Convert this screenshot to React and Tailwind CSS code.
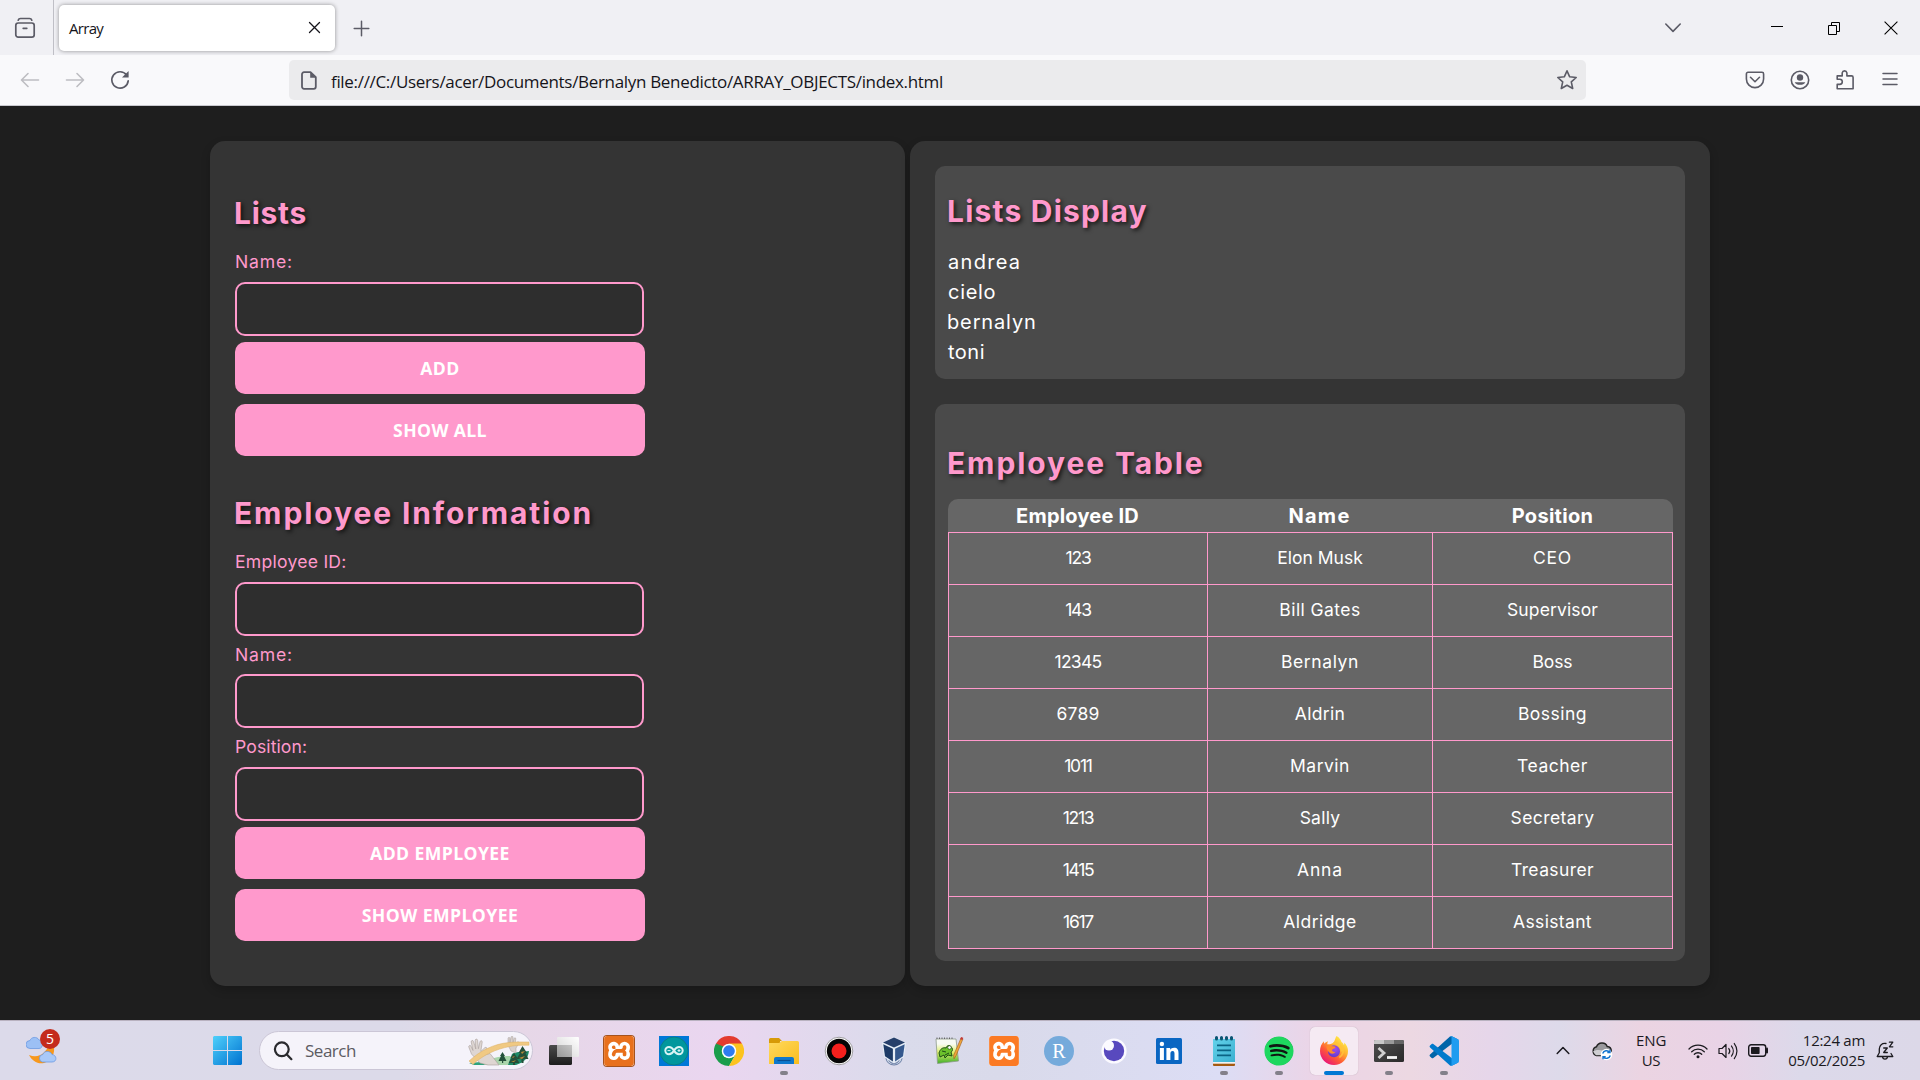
import React from "react";
import { SiXampp } from "react-icons/si";
import { FaSpotify } from "react-icons/fa";

/* ---------- Browser chrome ---------- */

function TabBar() {
  return (
    <div className="flex h-[55px] items-center bg-[#f0f0f4]">
      <div className="flex h-full w-[54px] items-center border-r border-[#bfbfc6] pl-[14px]">
        <svg width="22" height="22" viewBox="0 0 22 22" fill="none" stroke="#5b5b66" strokeWidth="1.7" strokeLinecap="round">
          <path d="M4.2 3.2C4.6 1.9 5.5 1.5 6.5 1.5h9c1 0 1.9.4 2.3 1.7" />
          <rect x="1.8" y="6" width="18.4" height="14.2" rx="2.4" />
          <path d="M9.2 11.3h3.6" />
        </svg>
      </div>
      <div className="ml-[5px] flex h-[46px] w-[276px] items-center rounded-[5px] bg-white pl-[10px] pr-[14px] shadow-[0_0_4px_rgba(0,0,0,0.4)]">
        <span className="mt-[1px] font-['Open_Sans',sans-serif] text-[15px] tracking-[-0.7px] text-[#15141a]">Array</span>
        <svg className="ml-auto" width="13" height="13" viewBox="0 0 13 13" stroke="#15141a" strokeWidth="1.3" strokeLinecap="round">
          <path d="M1.5 1.5l10 10M11.5 1.5l-10 10" />
        </svg>
      </div>
      <svg className="ml-[18px] mt-[2px]" width="17" height="17" viewBox="0 0 17 17" stroke="#5b5b66" strokeWidth="1.5" strokeLinecap="round">
        <path d="M8.5 1.2v14.6M1.2 8.5h14.6" />
      </svg>
      <div className="ml-auto mr-[22px] flex items-center">
        <svg width="18" height="12" viewBox="0 0 18 12" fill="none" stroke="#5b5b66" strokeWidth="1.6" strokeLinecap="round" strokeLinejoin="round">
          <path d="M1.8 2l7.2 7.4L16.200 2" />
        </svg>
        <svg className="ml-[88px] mt-[-3px]" width="14" height="3" viewBox="0 0 14 3"><path d="M1 1.500h12" stroke="#000" /></svg>
        <svg className="ml-[43px]" width="14" height="14" viewBox="0 0 14 14" fill="none" stroke="#000" strokeWidth="1">
          <path d="M1.500 4.500h8v9h-8zM4.500 4.500v-3h8v9h-3" />
        </svg>
        <svg className="ml-[43px]" width="14" height="14" viewBox="0 0 14 14" stroke="#000" strokeWidth="1.1">
          <path d="M.6.600l12.800 12.800M13.400.600L.600 13.400" />
        </svg>
      </div>
    </div>
  );
}

function NavBar() {
  return (
    <div className="flex h-[51px] items-center border-b border-[#c9c9cf] bg-[#f9f9fb]">
      <div className="flex items-center pl-5">
        <svg width="20" height="16" viewBox="0 0 20 16" fill="none" stroke="#bdbdc2" strokeWidth="1.6" strokeLinecap="round" strokeLinejoin="round">
          <path d="M18.500 8H1.800M8 1.500L1.500 8 8 14.500" />
        </svg>
        <svg className="ml-[25px]" width="20" height="16" viewBox="0 0 20 16" fill="none" stroke="#bdbdc2" strokeWidth="1.6" strokeLinecap="round" strokeLinejoin="round">
          <path d="M1.500 8h16.700M12 1.500L18.500 8 12 14.500" />
        </svg>
        <svg className="ml-[25px]" width="20" height="20" viewBox="0 0 20 20" fill="none" stroke="#5b5b66" strokeWidth="1.7" strokeLinecap="round">
          <path d="M16.600 5A8.200 8.200 0 1 0 18.200 10.800" />
          <path d="M18.600 1v6.600H12z" fill="#5b5b66" stroke="none" />
        </svg>
      </div>
      <div className="ml-[159px] flex h-10 w-[1297px] items-center rounded-[5px] bg-[#ebebed] pl-3 pr-2">
        <svg width="16" height="19" viewBox="0 0 16 19" fill="none" stroke="#5b5b66" strokeWidth="1.8" strokeLinejoin="round">
          <path d="M3 1.200h6.500l5.300 5v9.600a2 2 0 0 1-2 2H3a2 2 0 0 1-2-2V3.200a2 2 0 0 1 2-2z" />
          <path d="M9.200 1v5.700h5.800z" fill="#5b5b66" stroke="none" />
        </svg>
        <span className="ml-[14px] mt-[3px] whitespace-nowrap font-['Open_Sans',sans-serif] text-[17px] leading-6 tracking-[-0.32px] text-[#15141a]">
          file:///C:/Users/acer/Documents/Bernalyn Benedicto/ARRAY_OBJECTS/index.html
        </span>
        <svg className="ml-auto" width="22" height="22" viewBox="0 0 22 22" fill="none" stroke="#5b5b66" strokeWidth="1.6" strokeLinejoin="round">
          <path d="M11 1.800l2.700 6 6.500.700-4.900 4.300 1.400 6.700L11 16.200l-5.700 3.300 1.400-6.700L1.800 8.500l6.500-.7z" />
        </svg>
      </div>
      <div className="ml-auto mr-[22px] flex items-center">
        <svg width="20" height="18" viewBox="0 0 20 18" fill="none" stroke="#5b5b66" strokeWidth="1.600" strokeLinecap="round" strokeLinejoin="round">
          <path d="M3 1.300h14a1.600 1.600 0 0 1 1.600 1.600V8a8.600 8.600 0 0 1-17.200 0V2.900A1.600 1.600 0 0 1 3 1.300z" />
          <path d="M5.500 6.300L10 10.700l4.500-4.400" />
        </svg>
        <svg className="ml-[25px]" width="20" height="20" viewBox="0 0 20 20" fill="none" stroke="#5b5b66" strokeWidth="1.600">
          <circle cx="10" cy="10" r="8.700" />
          <circle cx="10" cy="7.500" r="3.200" fill="#5b5b66" stroke="none" />
          <path d="M4.700 12.200h10.600a5.700 4.200 0 0 1-10.600 0z" fill="#5b5b66" stroke="none" />
        </svg>
        <svg className="ml-[25px]" width="20" height="22" viewBox="0 0 20 22" fill="none" stroke="#5b5b66" strokeWidth="1.600" strokeLinejoin="round">
          <path d="M2.200 8.800V6.900h5V3.800a2.400 2.400 0 0 1 4.700 0v3.100h4.700a1.500 1.500 0 0 1 1.500 1.500v11.300H2.200v-4.300h2.500a2.600 2.600 0 0 0 0-5.200H2.200z" />
        </svg>
        <svg className="ml-[27px] mt-[-2px]" width="16" height="14" viewBox="0 0 16 14" stroke="#5b5b66" strokeWidth="1.500" strokeLinecap="round">
          <path d="M1 1.500h14M1 7h14M1 12.500h14" />
        </svg>
      </div>
    </div>
  );
}

/* ---------- Page content ---------- */

function Heading({ children, className }) {
  return (
    <h2 className={"whitespace-nowrap text-[30px] font-bold leading-10 text-[#ff99cc] [text-shadow:2px_2px_4px_rgba(0,0,0,0.7)] " + className}>
      {children}
    </h2>
  );
}

function Label({ children, className }) {
  return <label className={"block text-[17.6px] leading-[26px] text-[#ff99cc] " + className}>{children}</label>;
}

function Input({ className }) {
  return <input className={"block h-[54px] w-[409px] rounded-[10px] border-2 border-[#ff99cc] bg-[#2e2e2e] outline-none " + className} />;
}

function Button({ children, className }) {
  return (
    <button className={"block h-[52px] w-[410px] rounded-[10px] bg-[#ff99cc] text-center font-['Open_Sans',sans-serif] text-[17.6px] font-bold text-white " + className}>
      {children}
    </button>
  );
}

const ROWS = [
  ["123", "tracking-[-1.2px]", "Elon Musk", "tracking-[0px]", "CEO", "tracking-[0.7px]"],
  ["143", "tracking-[-1.2px]", "Bill Gates", "tracking-[0.44px]", "Supervisor", "tracking-[0.12px]"],
  ["12345", "tracking-[-0.7px]", "Bernalyn", "tracking-[0.6px]", "Boss", "tracking-[-0.1px]"],
  ["6789", "tracking-[0.2px]", "Aldrin", "tracking-[0.3px]", "Bossing", "tracking-[0.5px]"],
  ["1011", "tracking-[-1.2px]", "Marvin", "tracking-[0.5px]", "Teacher", "tracking-[0.5px]"],
  ["1213", "tracking-[-1.3px]", "Sally", "tracking-[0.25px]", "Secretary", "tracking-[0.4px]"],
  ["1415", "tracking-[-1.3px]", "Anna", "tracking-[0.9px]", "Treasurer", "tracking-[0.4px]"],
  ["1617", "tracking-[-1.3px]", "Aldridge", "tracking-[0.44px]", "Assistant", "tracking-[0.35px]"],
];

function EmployeeTable() {
  return (
    <div className="mt-4 w-[725px] overflow-hidden rounded-t-[10px] bg-[#666666] text-center text-white">
      <div className="grid h-[33px] grid-cols-[259px_225px_241px] pt-[2px] text-[20px] font-bold leading-[30px]">
        <div className="tracking-[0.2px]">Employee ID</div>
        <div className="tracking-[1.3px]">Name</div>
        <div className="tracking-[0.3px]">Position</div>
      </div>
      <div className="border-b border-r border-[#ff99cc] text-[17.5px] leading-[26px]">
        {ROWS.map((r) => (
          <div key={r[0]} className="grid h-[52px] grid-cols-[259px_225px_240px]">
            <div className={"border-l border-t border-[#ff99cc] pt-3 " + r[1]}>{r[0]}</div>
            <div className={"border-l border-t border-[#ff99cc] pt-3 " + r[3]}>{r[2]}</div>
            <div className={"border-l border-t border-[#ff99cc] pt-3 " + r[5]}>{r[4]}</div>
          </div>
        ))}
      </div>
    </div>
  );
}

function Page() {
  return (
    <main className="flex h-[914px] items-start justify-center gap-[5px] bg-[#1e1e1e] pt-[35px] font-[Inter,sans-serif]">
      <section className="h-[845px] w-[695px] rounded-[15px] bg-[#343434] pl-[25px] pt-[52px] shadow-[0_4px_10px_rgba(0,0,0,0.2)]">
        <Heading className="-ml-[1px] tracking-[0.7px]">Lists</Heading>
        <Label className="mt-4 tracking-[0.8px]">Name:</Label>
        <Input className="mt-[7px]" />
        <Button className="mt-[6px] tracking-[0.5px]">ADD</Button>
        <Button className="mt-[10px] tracking-[0.38px]">SHOW ALL</Button>

        <Heading className="-ml-[1px] mt-[37px] tracking-[1.9px]">Employee Information</Heading>
        <Label className="mt-4 tracking-[0.24px]">Employee ID:</Label>
        <Input className="mt-[7px]" />
        <Label className="mt-[6px] tracking-[0.8px]">Name:</Label>
        <Input className="mt-[6px]" />
        <Label className="mt-[6px] tracking-[0.1px]">Position:</Label>
        <Input className="mt-[7px]" />
        <Button className="mt-[6px] tracking-[0.41px]">ADD EMPLOYEE</Button>
        <Button className="mt-[10px] tracking-[0.44px]">SHOW EMPLOYEE</Button>
      </section>

      <section className="h-[845px] w-[800px] rounded-[15px] bg-[#343434] p-[25px] shadow-[0_4px_10px_rgba(0,0,0,0.2)]">
        <div className="h-[213px] rounded-[10px] bg-[#4a4a4a] pl-[13px] pt-[25px]">
          <Heading className="-ml-[1px] tracking-[1.2px]">Lists Display</Heading>
          <ul className="mt-4 text-[20px] leading-[30px] text-white">
            <li className="tracking-[1.3px]">andrea</li>
            <li className="tracking-[0.7px]">cielo</li>
            <li className="-ml-[1px] tracking-[0.86px]">bernalyn</li>
            <li className="tracking-[0.5px]">toni</li>
          </ul>
        </div>
        <div className="mt-[25px] h-[557px] rounded-[10px] bg-[#4a4a4a] pl-[13px] pt-[39px]">
          <Heading className="-ml-[1px] tracking-[1.9px]">Employee Table</Heading>
          <EmployeeTable />
        </div>
      </section>
    </main>
  );
}

/* ---------- Taskbar icons ---------- */

function WeatherIcon() {
  return (
    <div className="relative h-[38px] w-[36px]">
      <svg className="absolute left-0 top-[3px]" width="34" height="34" viewBox="0 0 34 34">
        <path d="M22 5a14 14 0 0 1-19 17c3 6 9 9.500 15 8 7-2 12-9 9.500-18.500C26.500 8 24.500 6 22 5z" fill="#f7981d" />
        <path d="M4 15.500a4 4 0 0 1 0-8C5 4 11 3 13 7c4 0 5 8.500 0 8.500z" fill="#9cc0f5" stroke="#6d9be2" strokeWidth=".8" />
        <path d="M16.500 29a3.800 3.800 0 0 1 .3-7.500c1.200-4 7.500-4.200 9.200 0 5 .5 5.400 7.500 0 7.500z" fill="#a9c9f8" stroke="#6d9be2" strokeWidth=".8" />
      </svg>
      <div className="absolute left-[14px] top-[-1px] flex size-5 items-center justify-center rounded-full bg-[#c42b1c] font-['Open_Sans',sans-serif] text-[14px] leading-none text-white">
        5
      </div>
    </div>
  );
}

function StartIcon() {
  return (
    <svg width="29" height="29" viewBox="0 0 29 29">
      <defs>
        <linearGradient id="start" x1="0" y1="0" x2="1" y2="1">
          <stop offset="0" stopColor="#4fd0fb" />
          <stop offset="1" stopColor="#0072d0" />
        </linearGradient>
      </defs>
      <path d="M1 0h13v14H0V1zM15 0h13l1 1v13H15zM0 15h14v14H1l-1-1zM15 15h14v13l-1 1H15z" fill="url(#start)" />
    </svg>
  );
}

function SearchPill() {
  return (
    <div className="ml-[17px] flex h-[39px] w-[274px] items-center overflow-hidden rounded-full border border-[#cbc6d6] bg-[#f5f3fa] pl-[13px]">
      <svg width="20" height="20" viewBox="0 0 20 20" fill="none" stroke="#2a2a2e" strokeWidth="2.200" strokeLinecap="round">
        <circle cx="8.800" cy="8.300" r="6.900" />
        <path d="M13.600 13.200l4.800 5" />
      </svg>
      <span className="ml-[12px] font-['Open_Sans',sans-serif] text-[17px] tracking-[-0.48px] text-[#5c5b62]">Search</span>
      <svg className="ml-auto mr-[2px]" width="62" height="30" viewBox="0 0 62 30">
        <path d="M10 29c10-7 22-9 32-9 4 3 2 8 1 9z" fill="#a9d5ab" />
        <path d="M1 27l12-1 4 3H6z" fill="#2fa37d" />
        <path d="M44 18c5-3 12-2 17-3-1 7-4 11-13 14h-8z" fill="#1d8a66" />
        <path d="M40 9V2.500c0-1.500 2-1.500 2 0V7l1-6c.3-1.200 2-1 2 .2V7l1-4.500c.4-1.200 2-.8 1.800.5L47 8l2.500-2c1-.5 2 .6 1.300 1.500L48 12v5l-5-2z" fill="#d8d0cc" stroke="#a79e9b" strokeWidth=".5" />
        <path d="M12 27L3.500 18 .8 11c-.4-1.600 1.500-2.200 2.200-.8l2 4.300L3.200 6c-.3-1.700 1.900-2.200 2.400-.5l2.200 7.500-.6-8.500c0-1.800 2.200-1.900 2.400-.1l.8 8.300 1.600-7c.5-1.600 2.500-1.100 2.200.5l-1.400 9.300 4-3.800c1.400-1 2.700.4 1.800 1.700L15 19.500l7-2 9 11.500H20z" fill="#ded6d2" stroke="#a79e9b" strokeWidth=".6" />
        <path d="M1 25C12 15 25 8 41 6.500c8-.8 13-.5 20-.5v3.200c-8 0-13 0-19 1.300C28 13 15 19 5 28.500z" fill="#f0c983" stroke="#dcb064" strokeWidth=".5" />
        <path d="M54.500 10l-4 7h1.500l-3.500 6h5V27h2v-4h5l-3-6H59zM46 17l-3.500 5h1.200l-3 5H45v2h2v-2h4.500l-3-5h1zM34.500 16L32 20h1l-2.500 5H34v2h1.200v-2h3.300L36 20h1z" fill="#24503a" />
        <path d="M53 16l4-1-3 3zM51 22l6-2-3 3zM44 21l3-1-2 2zM43 26l5-2-2 2z" fill="#b98b38" />
      </svg>
    </div>
  );
}

function TaskView() {
  return (
    <svg width="30" height="30" viewBox="0 0 30 30">
      <defs>
        <linearGradient id="tvd" x1="0" y1="0" x2="0" y2="1"><stop offset="0" stopColor="#4b4b4b" /><stop offset="1" stopColor="#1d1d1d" /></linearGradient>
        <linearGradient id="tvl" x1="0" y1="1" x2="1" y2="0"><stop offset="0" stopColor="#d4d4d4" /><stop offset="1" stopColor="#fff" /></linearGradient>
        <linearGradient id="tvm" x1="0" y1="1" x2="1" y2="0"><stop offset="0" stopColor="#989898" /><stop offset="1" stopColor="#c4c4c4" /></linearGradient>
      </defs>
      <rect x="0" y="9" width="23" height="20" rx="1.500" fill="url(#tvd)" />
      <rect x="8" y="1" width="22" height="20" rx="1" fill="url(#tvl)" />
      <path d="M8 9h15v12H8z" fill="url(#tvm)" />
    </svg>
  );
}

function Xampp({ old }) {
  return (
    <div className={"relative flex size-[30px] items-center justify-center rounded-[3px] bg-white " + (old ? "shadow-[0_0_0_1px_#a5521c]" : "")}>
      <SiXampp className={old ? "size-[30px] text-[#e8701c]" : "size-[30px] text-[#fb7a24]"} />
    </div>
  );
}

function Arduino() {
  return (
    <svg width="30" height="30" viewBox="0 0 30 30">
      <path d="M0 0h30v30H0z" fill="#0078d7" />
      <circle cx="15" cy="15" r="14" fill="#00979d" stroke="#0a7f86" />
      <path d="M15 14.500c-1.600-2.600-3-3.600-5-3.600a3.700 3.700 0 0 0 0 7.400c2 0 3.400-1 5-3.800 1.600-2.600 3-3.600 5-3.600a3.700 3.700 0 0 1 0 7.400c-2 0-3.400-1-5-3.800z" fill="none" stroke="#d8f4f4" strokeWidth="2" />
      <path d="M8.500 14.600h3M18.500 14.600h3M20 13.100v3" stroke="#d8f4f4" />
    </svg>
  );
}

function Chrome() {
  return (
    <svg width="30" height="30" viewBox="0 0 48 48">
      <path d="M24 24L3.200 12A24 24 0 0 1 44.800 12z" fill="#e33b2e" />
      <path d="M24 24L3.200 12A24 24 0 0 0 24 48l10.400-18z" fill="#1a9d4b" />
      <path d="M24 12h20.800A24 24 0 0 1 24 48l10.400-18z" fill="#fcc31e" />
      <path d="M3.200 12h20.800v12H13.600z" fill="#e33b2e" />
      <path d="M3.200 12l10.400 18 4-12z" fill="#1a9d4b" />
      <circle cx="24" cy="24" r="11.600" fill="#fff" />
      <circle cx="24" cy="24" r="9.300" fill="#2f7cf0" />
    </svg>
  );
}

function Explorer() {
  return (
    <svg width="30" height="30" viewBox="0 0 30 30">
      <defs><linearGradient id="fold" x1="0" y1="0" x2="1" y2="1"><stop offset="0" stopColor="#ffd95e" /><stop offset="1" stopColor="#f9bd1e" /></linearGradient></defs>
      <path d="M0 3.500A1.500 1.500 0 0 1 1.500 2h8.500l3 3h-2v5H0z" fill="#d79a07" />
      <path d="M0 7h10l3-2h15.500A1.500 1.500 0 0 1 30 6.500V28H0z" fill="url(#fold)" />
      <path d="M5 28v-5a2 2 0 0 1 2-2h16a2 2 0 0 1 2 2v5z" fill="#0f78cd" />
      <path d="M8.500 24.500h13" stroke="#0a4f92" strokeWidth="1.200" />
    </svg>
  );
}

function Recorder() {
  return (
    <svg width="30" height="30" viewBox="0 0 30 30">
      <circle cx="15" cy="15" r="13.800" fill="#fff" stroke="#8a8a8a" strokeWidth=".8" />
      <circle cx="15" cy="15" r="12.200" fill="#050505" />
      <circle cx="15" cy="15" r="7.500" fill="#f5201d" />
    </svg>
  );
}

function VirtualBox() {
  return (
    <svg width="30" height="30" viewBox="0 0 30 30">
      <path d="M7 22a8 7 0 0 0 16 0z" fill="#c9d3e4" stroke="#6b7fa6" />
      <path d="M10 24a5 3.500 0 0 0 10 0z" fill="#a9b7d0" stroke="#6b7fa6" />
      <path d="M15 1l12 6-2 14-10 6.500L5 21 3 7z" fill="#e6edf6" />
      <path d="M15 1.500l11 5L15 11.500 4 6.500z" fill="#263f6a" />
      <path d="M4.300 8.300l9.600 4.400v12.800L6 20.300z" fill="#1d3a66" />
      <path d="M25.700 8.300l-9.600 4.400v12.800l7.900-5.200z" fill="#35588d" />
    </svg>
  );
}

function NotepadPP() {
  return (
    <svg width="30" height="30" viewBox="0 0 30 30">
      <defs><linearGradient id="npp" x1="0" y1="0" x2="0" y2="1"><stop offset=".2" stopColor="#f8fbf4" /><stop offset=".55" stopColor="#dff06a" /><stop offset="1" stopColor="#3fae2a" /></linearGradient></defs>
      <path d="M2 3h20l2.500 22L3.500 27.500z" fill="url(#npp)" stroke="#8d9a8a" strokeWidth=".8" />
      <path d="M3 3v-1.500M5.500 3v-1.500M8 3v-1.500M10.500 3v-1.500M13 3v-1.500M15.500 3v-1.500M18 3v-1.500" stroke="#666" />
      <path d="M5 17c1-4 4-6 7-5 1-3 4-3 5-1 2 1 2 4 0 5l1 4-4-1-3 3-1-3-4 2z" fill="#6cc22c" stroke="#1f4d17" />
      <circle cx="15.500" cy="11.500" r="1.800" fill="#fff" stroke="#1f4d17" strokeWidth=".7" />
      <path d="M8 15l4 1M11 19l4-2" stroke="#1f4d17" />
      <path d="M27 2l2 .8-7 17-2 3-.3-3.600z" fill="#f0a53a" stroke="#9c5a1b" strokeWidth=".6" />
      <path d="M27 1l2.200.8-.8 2.200-2.200-.8z" fill="#c43a3a" />
    </svg>
  );
}

function RStudio() {
  return (
    <div className="flex size-[30px] items-center justify-center rounded-full bg-[#75aadb] font-['Liberation_Serif',serif] text-[20px] leading-none text-white">R</div>
  );
}

function Insomnia() {
  return (
    <svg width="30" height="30" viewBox="0 0 30 30">
      <circle cx="15" cy="15" r="12.600" fill="#fbfaff" />
      <circle cx="15" cy="15" r="10.200" fill="#5849be" />
      <circle cx="10" cy="9.600" r="5" fill="#fbfaff" />
    </svg>
  );
}

function LinkedIn() {
  return (
    <svg width="30" height="30" viewBox="0 0 30 30">
      <rect x="2" y="2" width="26" height="26" rx="1.500" fill="#0a66c2" />
      <circle cx="7.900" cy="8" r="2.200" fill="#fff" />
      <path d="M5.900 12h4v12h-4zM12.400 12h3.800v1.700c.7-1.200 2-2 3.900-2 3.300 0 4.400 2 4.400 5.300v7h-4v-6.200c0-1.700-.4-2.800-1.900-2.800-1.600 0-2.200 1.100-2.200 2.800V24h-4z" fill="#fff" />
    </svg>
  );
}

function Notepad() {
  return (
    <svg width="30" height="30" viewBox="0 0 30 30">
      <defs><linearGradient id="note" x1="0" y1="0" x2="1" y2="1"><stop offset="0" stopColor="#63d2ea" /><stop offset="1" stopColor="#3bb0d0" /></linearGradient></defs>
      <path d="M4 27h22v2a1 1 0 0 1-1 1H5a1 1 0 0 1-1-1z" fill="#a55a10" />
      <path d="M4 26h22v1.700H4z" fill="#f2f2f2" />
      <path d="M4 3h22v23H4z" fill="url(#note)" />
      <path d="M8 9.300h14M8 14.300h14M8 19.300h14" stroke="#0b6384" strokeWidth="1.800" />
      <path d="M7.500 1.500v1.500M12.500 1.500v1.500M17.500 1.500v1.500M22.500 1.500v1.500" stroke="#0b5573" strokeWidth="3" strokeLinecap="round" />
    </svg>
  );
}

function Spotify() {
  return (
    <div className="flex size-[30px] items-center justify-center">
      <div className="flex size-[28px] items-center justify-center rounded-full bg-[#101512]">
        <FaSpotify className="size-[30px] shrink-0 text-[#1ed75f]" />
      </div>
    </div>
  );
}

function Firefox() {
  return (
    <svg width="30" height="30" viewBox="0 0 30 30">
      <defs>
        <linearGradient id="fx" x1=".85" y1=".1" x2=".2" y2=".95">
          <stop offset="0" stopColor="#fff04a" /><stop offset=".35" stopColor="#ffb02e" /><stop offset=".65" stopColor="#ff5a36" /><stop offset="1" stopColor="#e8127c" />
        </linearGradient>
        <radialGradient id="fp" cx=".6" cy=".3" r=".8"><stop offset="0" stopColor="#a04df0" /><stop offset="1" stopColor="#5a38c8" /></radialGradient>
      </defs>
      <path d="M17.500 0c3 1.500 4.500 4.300 5 6 1.500 1 2 2 2.300 3 .6-.5.500-1.800.300-2.600C28 9 29 12 29 15a14 14 0 0 1-28 0c0-3.600 1.500-7.500 4-9.700 0 1-.1 1.800.2 2.500 1-1.300 2.400-2.200 3.900-2.600-.6 1-.9 2-.8 3 2 .2 4-.2 5.700-1.300C16 5.500 16 2 17.500 0z" fill="url(#fx)" />
      <circle cx="15" cy="15.300" r="6" fill="url(#fp)" />
      <path d="M7.500 10c2-1 4-.8 6 .2 2 0 3 .6 3 1.200-1 1.200-2.800 1-3.500 2.600.2 1.500 2 2.200 3.600 1.800-1.500 2.500-5 2.500-7 0C8 14 7.500 12 7.500 10z" fill="#ff8a2c" />
      <path d="M14 7c4 0 8 3 8.500 7.500 1-1 1-3 .8-4.500 2 5 .5 9-3 11.500" fill="none" stroke="#ffc53a" strokeWidth="1.600" opacity=".8" />
    </svg>
  );
}

function Terminal() {
  return (
    <svg width="30" height="30" viewBox="0 0 30 30">
      <defs><linearGradient id="term" x1="0" y1="0" x2="1" y2="1"><stop offset="0" stopColor="#505050" /><stop offset="1" stopColor="#2a2a2a" /></linearGradient></defs>
      <rect x="0" y="4" width="30" height="22" rx="1.500" fill="url(#term)" />
      <path d="M0 8V5.500A1.500 1.500 0 0 1 1.500 4H10v4z" fill="#c8c8c8" />
      <path d="M10 4h10v4H10z" fill="#9a9a9a" />
      <path d="M20 4h8.500A1.500 1.500 0 0 1 30 5.500V8H20z" fill="#666" />
      <path d="M4.500 12l5.500 5-5.500 5" fill="none" stroke="#cfcfcf" strokeWidth="2.800" />
      <path d="M13 21.500h10" stroke="#f4f4f4" strokeWidth="2.800" />
    </svg>
  );
}

function VSCode() {
  return (
    <svg width="30" height="30" viewBox="0 0 100 100">
      <path d="M96 11L76 1c-2.500-1-5-.6-7 1.200L3.500 62c-2 1.800-2 4.500 0 6l5.500 5c1.500 1.400 3.700 1.500 5.300.3L93 13.500c2.600-2 6-.3 6 3V16c0-2.200-1-4.200-3-5z" fill="#0065a9" />
      <path d="M96 89L76 99c-2.500 1-5 .6-7-1.200L3.500 38c-2-1.800-2-4.500 0-6L9 27c1.500-1.400 3.700-1.500 5.300-.3L93 86.500c2.600 2 6 .3 6-3V84c0 2.200-1 4.200-3 5z" fill="#007acc" />
      <path d="M76 99c-2.500 1-5 .6-7-1.300 2.300 2.300 6 .7 6-2.500V4.800c0-3.200-3.700-4.800-6-2.500C71 .4 73.500 0 76 1l20.500 10c2 1 3.500 3 3.500 5.500v67c0 2.500-1.500 4.500-3.500 5.500z" fill="#1f9cf0" />
    </svg>
  );
}

function TaskItem({ children, running, active }) {
  return (
    <div className={"relative flex size-12 shrink-0 items-center justify-center rounded-[5px] " + (active ? "bg-[#f5eaf3] shadow-[0_0_1px_rgba(0,0,0,0.25)]" : "")}>
      {children}
      {running && <div className="absolute bottom-0 left-5 h-1 w-2 rounded-full bg-[#83808a]" />}
      {active && <div className="absolute bottom-0 left-[14px] h-1 w-5 rounded-full bg-[#0078d4]" />}
    </div>
  );
}

function Tray() {
  return (
    <div className="ml-auto flex h-full items-center pr-[26px] font-['Open_Sans',sans-serif] text-[15px] leading-5 text-[#1b1a1f]">
      <svg width="14" height="9" viewBox="0 0 14 9" fill="none" stroke="#1b1a1f" strokeWidth="1.500" strokeLinecap="round" strokeLinejoin="round">
        <path d="M1.200 7.500L7 1.500l5.800 6" />
      </svg>
      <svg className="ml-[21px]" width="22" height="20" viewBox="0 0 22 20">
        <path d="M5.500 14.500a4.500 4.500 0 0 1 0-8.700C7 1 14.500.500 16.200 5.500c5.500.500 5.500 9 0 9z" fill="#9a999d" stroke="#222" strokeWidth="1.400" />
        <path d="M2 10.500c3-2 10-3 15 3.500l-12 .3z" fill="#cfced2" />
        <circle cx="15.500" cy="13.500" r="5.800" fill="#fff" />
        <path d="M11.700 12.500a4 4 0 0 1 7-1.200M19.300 14.500a4 4 0 0 1-7 1.300M19 8.800v2.700h-2.700M12 18.300v-2.700h2.700" fill="none" stroke="#1273cf" strokeWidth="1.400" />
      </svg>
      <div className="ml-[23px] mt-[-1px] w-[30px] text-center">
        <div className="tracking-[-0.1px]">ENG</div>
        <div className="tracking-[-0.4px]">US</div>
      </div>
      <svg className="ml-[22px]" width="20" height="16" viewBox="0 0 20 16" fill="none" stroke="#1b1a1f" strokeWidth="1.300" strokeLinecap="round">
        <path d="M1 6a12.500 12.500 0 0 1 18 0M3.700 8.700a8.800 8.800 0 0 1 12.600 0M6.300 11.300a5.200 5.200 0 0 1 7.400 0" />
        <circle cx="10" cy="13.700" r="1.500" fill="#1b1a1f" stroke="none" />
      </svg>
      <svg className="ml-[10px]" width="21" height="18" viewBox="0 0 21 18" fill="none" stroke="#1b1a1f" strokeWidth="1.200" strokeLinecap="round" strokeLinejoin="round">
        <path d="M1 6.500h3l4-4v13l-4-4H1z" />
        <path d="M10.800 6.500a4 4 0 0 1 0 5M13.500 4a8 8 0 0 1 0 10M16.300 1.500a12 12 0 0 1 0 15" />
      </svg>
      <svg className="ml-[9px]" width="21" height="13" viewBox="0 0 21 13" fill="none" stroke="#1b1a1f" strokeWidth="1.400">
        <rect x=".7" y=".8" width="17" height="11.400" rx="2.400" />
        <rect x="3" y="3" width="8.600" height="7" rx=".8" fill="#1b1a1f" stroke="none" />
        <path d="M19 4.500v4" strokeWidth="2" strokeLinecap="round" />
      </svg>
      <div className="ml-[18px] mt-[-1px] w-[78px] whitespace-nowrap text-right tracking-[-0.28px]">
        <div>12:24 am</div>
        <div>05/02/2025</div>
      </div>
      <svg className="ml-[11px]" width="18" height="20" viewBox="0 0 18 20" fill="none" stroke="#1b1a1f" strokeWidth="1.300" strokeLinecap="round" strokeLinejoin="round">
        <path d="M10 2.500C6 1.800 3.300 4.500 3.300 8v3.800L1.200 15.500h15.600l-1.800-3M6.500 15.800c.3 3 4.700 3 5 0" />
        <path d="M7.700 7h3.600l-3.600 4.500h3.600M13.400 1.200h3.400l-3.400 4.600h3.400" />
      </svg>
    </div>
  );
}

function Taskbar() {
  return (
    <footer className="flex h-[60px] items-center border-t border-[#b9b2c0] bg-[linear-gradient(90deg,#dcdaea_0px,#dcdae9_400px,#e6d7e7_520px,#ead6f0_720px,#dadbeb_900px,#d9daea_1000px,#dcddf5_1220px,#ecd4e6_1320px,#ecd8e2_1410px,#e6d6ea_1490px,#dddaea_1560px,#ebd4e2_1640px,#e9d3e6_1720px,#dcd9ea_1800px,#dcd8e8_1920px)]">
      <div className="-mt-1 pl-[26px]"><WeatherIcon /></div>
      <div className="ml-[151px]"><StartIcon /></div>
      <SearchPill />
      <div className="ml-[7px] flex items-center gap-[7px]">
        <TaskItem><TaskView /></TaskItem>
        <TaskItem><Xampp old /></TaskItem>
        <TaskItem><Arduino /></TaskItem>
        <TaskItem><Chrome /></TaskItem>
        <TaskItem running><Explorer /></TaskItem>
        <TaskItem><Recorder /></TaskItem>
        <TaskItem><VirtualBox /></TaskItem>
        <TaskItem><NotepadPP /></TaskItem>
        <TaskItem><Xampp /></TaskItem>
        <TaskItem><RStudio /></TaskItem>
        <TaskItem><Insomnia /></TaskItem>
        <TaskItem><LinkedIn /></TaskItem>
        <TaskItem running><Notepad /></TaskItem>
        <TaskItem running><Spotify /></TaskItem>
        <TaskItem active><Firefox /></TaskItem>
        <TaskItem running><Terminal /></TaskItem>
        <TaskItem running><VSCode /></TaskItem>
      </div>
      <Tray />
    </footer>
  );
}

export default function App() {
  return (
    <div className="h-[1080px] w-[1920px] overflow-hidden">
      <TabBar />
      <NavBar />
      <Page />
      <Taskbar />
    </div>
  );
}
